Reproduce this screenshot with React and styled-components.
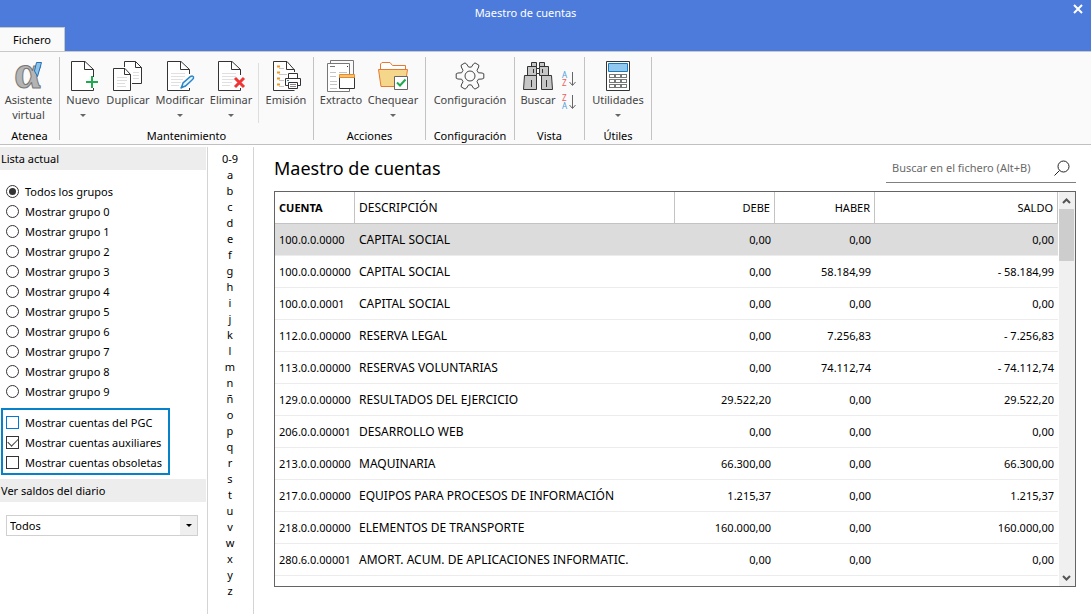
import React from "react";
import styled, { createGlobalStyle, css } from "styled-components";

const GlobalStyle = createGlobalStyle`
  * { box-sizing: border-box; }
  body {
    margin: 0;
    background: #fff;
    color: #000;
    font-family: "Noto Sans", "Open Sans", sans-serif;
    font-size: 11px;
    line-height: 16px;
  }
  button, input, select { font: inherit; color: inherit; }
`;

/* ---------- Shell ---------- */

const Shell = styled.div`
  display: flex;
  flex-direction: column;
  height: 100vh;
`;

const TitleBar = styled.header`
  display: grid;
  grid-template-columns: 1fr auto 1fr;
  align-items: center;
  height: 27px;
  flex: none;
  padding: 0 6px 2px 0;
  background: #4d7bdb;
  color: #fff;
`;

const WindowTitle = styled.div`
  grid-column: 2;
  padding-right: 34px;
`;

const CloseButton = styled.button`
  justify-self: end;
  display: flex;
  padding: 0 0 8px;
  border: 0;
  background: none;
`;

const TabStrip = styled.nav`
  display: flex;
  flex: none;
  height: 24px;
  background: #4d7bdb;
`;

const Tab = styled.button`
  width: 65px;
  border: 0;
  border-top: 1px solid #c8c8c8;
  border-right: 1px solid #c8c8c8;
  padding: 0;
  background: #fafafa;
`;

const Ribbon = styled.div`
  display: flex;
  flex: none;
  height: 94px;
  padding: 5px 0 4px;
  background: #fafafa;
  border-top: 1px solid #c8c8c8;
  border-bottom: 1px solid #c0c0c0;
`;

const Group = styled.section`
  display: flex;
  flex-direction: column;
  width: ${(p) => p.$width}px;
  border-right: 1px solid #c3c3c3;
`;

const GroupTools = styled.div`
  display: flex;
  flex: 1;
  padding: 3px 0 0 ${(p) => p.$start}px;
`;

const GroupLabel = styled.div`
  height: 10px;
  line-height: 12px;
  text-align: center;
`;

const Tool = styled.button`
  display: flex;
  flex-direction: column;
  align-items: center;
  width: ${(p) => p.$width}px;
  padding: 0;
  border: 0;
  background: none;
  color: #444;
  line-height: 15px;
  white-space: pre;

  svg { flex: none; overflow: visible; }
`;

const Caret = styled.span`
  margin-top: 7px;
  border: 3px solid transparent;
  border-top-color: #666;
  border-bottom: 0;
`;

const ToolDivider = styled.span`
  width: 1px;
  height: 60px;
  margin: 3px 1px 0 4px;
  background: #dedede;
`;

const SortStack = styled.div`
  display: flex;
  flex-direction: column;
  gap: 7px;
  padding: 11px 0 0 4px;
`;

const SortButton = styled.button`
  display: flex;
  padding: 0;
  border: 0;
  background: none;
  svg { overflow: visible; }
`;

/* ---------- Body ---------- */

const Body = styled.div`
  display: flex;
  flex: 1;
  min-height: 0;
  padding-top: 2px;
`;

const Sidebar = styled.aside`
  flex: none;
  width: 208px;
  border-right: 1px solid #d4d4d4;
`;

const SideHeading = styled.h2`
  margin: 0 1px 0 0;
  padding: 0 1px;
  background: #ededed;
  font-size: 11px;
  font-weight: 400;
  line-height: 23px;
`;

const OptionList = styled.div`
  display: flex;
  flex-direction: column;
  padding: 12px 6px 6px;
`;

const Option = styled.label`
  display: flex;
  align-items: center;
  gap: 6px;
  height: 20px;
`;

const mark = css`
  appearance: none;
  flex: none;
  display: grid;
  place-items: center;
  width: 13px;
  height: 13px;
  margin: 0 0 1px;
  border: 1px solid #333;
  background: #fff;
`;

const Radio = styled.input`
  ${mark}
  border-radius: 50%;
  &:checked::before {
    content: "";
    width: 7px;
    height: 7px;
    border-radius: 50%;
    background: #333;
  }
`;

const CheckBox = styled.input`
  ${mark}
  border-color: ${(p) => (p.$focused ? "#0078d7" : "#333")};
  &:checked::before {
    content: "";
    width: 9px;
    height: 5px;
    margin-bottom: 3px;
    border: solid #444;
    border-width: 0 0 1px 1px;
    transform: rotate(-45deg);
  }
`;

const CheckFrame = styled.div`
  width: 169px;
  margin: 0 0 4px 1px;
  padding: 3px 3px 0;
  border: 2px solid #0582ca;
`;

const SelectBox = styled.div`
  display: grid;
  grid-template-columns: 1fr 17px;
  margin: 13px 9px 0 6px;
  border: 1px solid #d0d0d0;
`;

const Select = styled.select`
  grid-area: 1 / 1 / 2 / 3;
  appearance: none;
  height: 19px;
  padding: 0 3px;
  border: 0;
  background: none;
`;

const SelectArrow = styled.span`
  grid-area: 1 / 2;
  display: grid;
  place-items: center;
  background: #efefef;
  pointer-events: none;
  &::before {
    content: "";
    border: 3px solid transparent;
    border-top-color: #000;
    border-bottom: 0;
  }
`;

const LetterIndex = styled.nav`
  display: flex;
  flex-direction: column;
  align-items: center;
  flex: none;
  width: 46px;
  padding: 4px 1px 0 0;
  border-right: 1px solid #d4d4d4;
`;

const Letter = styled.a`
  color: #000;
  text-decoration: none;
`;

const Main = styled.main`
  display: flex;
  flex-direction: column;
  flex: 1;
  min-width: 0;
  padding: 8px 15px 27px 20px;
`;

const MainHeader = styled.div`
  display: flex;
  justify-content: space-between;
  align-items: flex-start;
  height: 36px;
  flex: none;
`;

const Heading = styled.h1`
  margin: 0;
  font-size: 18px;
  font-weight: 400;
  line-height: 26px;
`;

const SearchField = styled.label`
  display: flex;
  align-items: center;
  justify-content: space-between;
  width: 190px;
  height: 28px;
  padding: 0 6px 2px;
  border-bottom: 1px solid #808080;
`;

const SearchInput = styled.input`
  flex: 1;
  min-width: 0;
  padding: 0;
  border: 0;
  outline: 0;
  background: none;
  &::placeholder { color: #6a6a6a; opacity: 1; }
`;

const GridFrame = styled.div`
  display: flex;
  flex: 1;
  min-height: 0;
  border: 1px solid #646464;
`;

const GridView = styled.div`
  flex: 1;
  min-width: 0;
  overflow: hidden;
`;

const Table = styled.table`
  width: 100%;
  border-collapse: separate;
  border-spacing: 0;
  table-layout: fixed;
`;

const HeadCell = styled.th`
  width: ${(p) => (p.$width ? `${p.$width}px` : "auto")};
  height: 32px;
  padding: 0 4px;
  border-right: 1px solid #c3c3c3;
  border-bottom: 1px solid #c3c3c3;
  font-size: ${(p) => (p.$sorted || p.$num ? 11 : 12)}px;
  font-weight: ${(p) => (p.$sorted ? 700 : 400)};
  text-align: ${(p) => (p.$num ? "right" : "left")};
`;

const Cell = styled.td`
  height: 32px;
  padding: 0 4px;
  border-bottom: 1px solid #ececec;
  background: ${(p) => (p.$selected ? "#dcdcdc" : "#fff")};
  font-size: ${(p) => (p.$figures ? 11 : 12)}px;
  text-align: ${(p) => (p.$num ? "right" : "left")};
  white-space: nowrap;
`;

const ScrollBar = styled.div`
  display: flex;
  flex-direction: column;
  flex: none;
  width: 16px;
  margin-left: 1px;
  padding-right: 1px;
  background: #f0f0f0;
`;

const ScrollButton = styled.button`
  display: grid;
  place-items: center;
  height: 17px;
  padding: 0;
  border: 0;
  background: none;
`;

const ScrollThumb = styled.div`
  height: 52px;
  margin-bottom: auto;
  background: #cdcdcd;
`;

/* ---------- Icons ---------- */

const Icon = ({ children, size = 32 }) => (
  <svg width={size} height={size} viewBox={`0 0 ${size} ${size}`} fill="none" aria-hidden="true">
    {children}
  </svg>
);

const Sheet = ({ x = 3, lines, cutY = 17 }) => (
  <g transform={`translate(${x} 0)`}>
    <path d={`M22.5 ${cutY}V9.5L14.5 1.5H.5V30.5H22.5V28`} fill="#fff" />
    <path d={`M22.5 ${cutY}V9.5L14 1.5H.5V30.5H22.5V28M13.5 1.5V9.5H22.5`} stroke="#333" />
    {lines && <path d="M4 13.5H18M4 16.5H18M4 19.5H16M4 22.5H14M4 25.5H12" stroke="#e0e0e0" />}
  </g>
);

const AlphaIcon = () => (
  <Icon>
    <text x="1" y="28" fontFamily="Liberation Serif, serif" fontWeight="700" fontSize="48" fill="#b4b4b4" stroke="#777">α</text>
    <path d="M23.5 2.5H28.5L24.5 16.5L21.5 11Z" fill="#8cc3ea" stroke="#2a6fb0" />
  </Icon>
);

const NewIcon = () => (
  <Icon>
    <Sheet x={4} />
    <path d="M25 16V28M19 22H31" stroke="#1faa50" strokeWidth="2" />
  </Icon>
);

const DuplicateIcon = () => (
  <Icon>
    <path d="M12.5 7V1.5H23.5L29.5 7.5V23.5H20" stroke="#333" fill="#fff" />
    <path d="M23.5 1.5V7.5H29.5" stroke="#333" />
    <path d="M21 12.5H27M21 15.5H27M21 18.5H27" stroke="#ddd" />
    <path d="M1.5 8.5H13L18.5 14.5V30.5H1.5Z" stroke="#333" fill="#fff" />
    <path d="M12.5 8.5V14.5H18.5" stroke="#333" />
    <path d="M5 17.5H15M5 20.5H15M5 23.5H13M5 26.5H14" stroke="#ddd" />
  </Icon>
);

const EditIcon = () => (
  <Icon>
    <Sheet lines cutY={14} />
    <path d="M17.5 27.5L19 23L26.5 16.5Q29 15.5 29.5 17Q30 18.5 28 20L21.5 26Z" fill="#e8f4fc" stroke="#2a86c8" strokeWidth="1.5" />
    <path d="M17 28L19 26" stroke="#2a86c8" strokeWidth="2" />
  </Icon>
);

const DeleteIcon = () => (
  <Icon>
    <Sheet lines cutY={15} />
    <path d="M20 18L29 27M29 18L20 27" stroke="#ee3636" strokeWidth="3" />
  </Icon>
);

const PrintIcon = () => (
  <Icon>
    <path d="M3.5 1.5H17.5L24.5 9.5V30.5H3.5Z" fill="#fff" />
    <path d="M24.5 12V10L17 1.5H3.5V30.5H24.5M16.5 1.5V9.5H24.5" stroke="#333" />
    <path d="M7 6.5H10M7 12.5H10M7 18.5H10M7 24.5H10" stroke="#f09a1a" strokeWidth="2" />
    <path d="M9 8.5H14M9 14.5H17M9 20.5H14M9 26.5H14" stroke="#c8c8c8" />
    <path d="M18.5 18.5V13.5H27.5V18.5" stroke="#333" fill="#fff" />
    <path d="M15.5 18.5H30.5V25.5H15.5Z" stroke="#333" fill="#fff" />
    <path d="M17 20.5H19" stroke="#2a86c8" />
    <path d="M18.5 22.5H27.5V28.5H18.5Z" stroke="#333" fill="#fff" />
    <path d="M20 24.5H26M20 26.5H26" stroke="#888" />
  </Icon>
);

const StatementIcon = () => (
  <Icon>
    <path d="M5.5 3.5V.5H28.5V14" stroke="#777" />
    <path d="M2.5 3.5H24.5V31.5H2.5Z" fill="#fff" stroke="#777" />
    <path d="M5 6.5H10" stroke="#777" />
    <path d="M22 6.5H23" stroke="#333" />
    <path d="M5 12.5H11M14 12.5H22M5 16.5H11M5 21.5H12M5 24.5H12M5 28.5H12" stroke="#c4c4c4" />
    <path d="M14.5 17H29.5V28.5H14.5Z" fill="#fff" stroke="#333" />
    <path d="M14.5 14.5H29.5V17.5H14.5Z" fill="#f6c477" stroke="#e88a2a" />
  </Icon>
);

const CheckFolderIcon = () => (
  <Icon>
    <path d="M3.5 9V4L5 2.5H13L15.5 5.5H28.5V10" fill="#fff" stroke="#e87830" />
    <path d="M1.5 9.5H30.5L28 26.5H4Z" fill="#f5d78c" stroke="#e87830" />
    <path d="M17.5 16.5H30.5V29.5H17.5Z" fill="#fff" stroke="#666" />
    <path d="M20 22.5L23 25.5L28.5 19.5" stroke="#1faa50" strokeWidth="2" />
  </Icon>
);

const gearPath =
  [0, 1, 2, 3, 4, 5]
    .flatMap((tooth) =>
      [[-21, 9], [-14, 12.5], [-9, 14], [9, 14], [14, 12.5], [21, 9]].map(([angle, radius]) => {
        const rad = ((tooth * 60 + angle) * Math.PI) / 180;
        return `${(16 + radius * Math.cos(rad)).toFixed(1)} ${(16 + radius * Math.sin(rad)).toFixed(1)}`;
      })
    )
    .reduce((path, point, i) => path + (i ? "L" : "M") + point, "") + "Z";

const GearIcon = () => (
  <Icon>
    <path d={gearPath} stroke="#444" strokeLinejoin="round" />
    <circle cx="16" cy="16" r="5" stroke="#444" />
  </Icon>
);

const BinocularsIcon = () => (
  <Icon>
    <g fill="#c6c6c6" stroke="#333">
      <path d="M9.5 2.5H14.5V6.5H9.5ZM17.5 2.5H22.5V6.5H17.5Z" />
      <path d="M5.5 6.5H14.5V15.5H5.5ZM17.5 6.5H26.5V15.5H17.5Z" />
      <path d="M2.5 15.5H14.5V29.5H1.5ZM19.5 15.5H29.5L30.5 29.5H19.5Z" />
      <path d="M14.5 8.5H17.5V13.5H14.5Z" fill="#fff" />
      <path d="M11.5 9V13M20.5 9V13M9.5 20V27M24.5 20V27" />
    </g>
  </Icon>
);

const CalculatorIcon = () => (
  <Icon>
    <path d="M4.5 1.5H27.5V30.5H4.5Z" fill="#fff" stroke="#333" />
    <path d="M6.5 3.5H25.5V11.5H6.5Z" fill="#90c8f0" stroke="#1a78b8" />
    <g stroke="#777">
      {[14.5, 19.5, 24.5].map((y) =>
        [7.5, 13.5, 19.5].map((x) => <rect key={`${x}-${y}`} x={x} y={y} width="5" height="3" />)
      )}
    </g>
  </Icon>
);

const SortIcon = ({ top, bottom }) => {
  const tint = { A: "#4aa0d8", Z: "#ee5a5a" };
  return (
    <Icon size={16}>
      <text x="1" y="7" fontSize="8" fontFamily="Noto Sans, sans-serif" fill={tint[top]}>{top}</text>
      <text x="1" y="15" fontSize="8" fontFamily="Noto Sans, sans-serif" fill={tint[bottom]}>{bottom}</text>
      <path d="M11.5 1V14M8.5 11L11.5 14.5L14.5 11" stroke="#666" />
    </Icon>
  );
};

const SearchIcon = () => (
  <Icon size={16}>
    <circle cx="9.5" cy="6.5" r="5.5" stroke="#222" />
    <path d="M5.5 10.5L.5 15.5" stroke="#222" />
  </Icon>
);

const CloseIcon = () => (
  <svg width="14" height="10" viewBox="0 0 14 10" aria-hidden="true">
    <path d="M3 1L11 9M11 1L3 9" stroke="#fff" strokeWidth="2" />
  </svg>
);

const Chevron = ({ down }) => (
  <svg width="9" height="6" viewBox="0 0 9 6" fill="none" aria-hidden="true">
    <path d={down ? "M1 1L4.5 4.5L8 1" : "M1 5L4.5 1.5L8 5"} stroke="#555" strokeWidth="2" />
  </svg>
);

/* ---------- Data ---------- */

const groups = [
  { label: "Atenea", width: 60, start: 0, tools: [{ label: "Asistente\nvirtual", width: 57, icon: AlphaIcon }] },
  {
    label: "Mantenimiento",
    width: 254,
    start: 2,
    tools: [
      { label: "Nuevo", width: 42, icon: NewIcon, menu: true },
      { label: "Duplicar", width: 48, icon: DuplicateIcon },
      { label: "Modificar", width: 56, icon: EditIcon, menu: true },
      { label: "Eliminar", width: 46, icon: DeleteIcon, menu: true },
      { divider: true },
      { label: "Emisión", width: 52, icon: PrintIcon },
    ],
  },
  {
    label: "Acciones",
    width: 112,
    start: 3,
    tools: [
      { label: "Extracto", width: 48, icon: StatementIcon },
      { label: "Chequear", width: 56, icon: CheckFolderIcon, menu: true },
    ],
  },
  { label: "Configuración", width: 89, start: 4, tools: [{ label: "Configuración", width: 80, icon: GearIcon }] },
  { label: "Vista", width: 70, start: 4, tools: [{ label: "Buscar", width: 38, icon: BinocularsIcon }, { sort: true }] },
  { label: "Útiles", width: 67, start: 3, tools: [{ label: "Utilidades", width: 60, icon: CalculatorIcon, menu: true }] },
];

const accountGroups = ["Todos los grupos", ...Array.from({ length: 10 }, (_, i) => `Mostrar grupo ${i}`)];
const letters = ["0-9", ..."abcdefghijklmnñopqrstuvwxyz"];

const accounts = [
  ["100.0.0.0000", "CAPITAL SOCIAL", "0,00", "0,00", "0,00"],
  ["100.0.0.00000", "CAPITAL SOCIAL", "0,00", "58.184,99", "- 58.184,99"],
  ["100.0.0.0001", "CAPITAL SOCIAL", "0,00", "0,00", "0,00"],
  ["112.0.0.00000", "RESERVA LEGAL", "0,00", "7.256,83", "- 7.256,83"],
  ["113.0.0.00000", "RESERVAS VOLUNTARIAS", "0,00", "74.112,74", "- 74.112,74"],
  ["129.0.0.00000", "RESULTADOS DEL EJERCICIO", "29.522,20", "0,00", "29.522,20"],
  ["206.0.0.00001", "DESARROLLO WEB", "0,00", "0,00", "0,00"],
  ["213.0.0.00000", "MAQUINARIA", "66.300,00", "0,00", "66.300,00"],
  ["217.0.0.00000", "EQUIPOS PARA PROCESOS DE INFORMACIÓN", "1.215,37", "0,00", "1.215,37"],
  ["218.0.0.00000", "ELEMENTOS DE TRANSPORTE", "160.000,00", "0,00", "160.000,00"],
  ["280.6.0.00001", "AMORT. ACUM. DE APLICACIONES INFORMATIC.", "0,00", "0,00", "0,00"],
];

/* ---------- Parts ---------- */

const RibbonTool = ({ tool }) => {
  if (tool.divider) return <ToolDivider />;
  if (tool.sort) {
    return (
      <SortStack>
        <SortButton aria-label="Orden ascendente"><SortIcon top="A" bottom="Z" /></SortButton>
        <SortButton aria-label="Orden descendente"><SortIcon top="Z" bottom="A" /></SortButton>
      </SortStack>
    );
  }
  const ToolIcon = tool.icon;
  return (
    <Tool $width={tool.width}>
      <ToolIcon />
      {tool.label}
      {tool.menu && <Caret />}
    </Tool>
  );
};

export default function App() {
  return (
    <>
      <GlobalStyle />
      <Shell>
        <TitleBar>
          <WindowTitle>Maestro de cuentas</WindowTitle>
          <CloseButton aria-label="Cerrar"><CloseIcon /></CloseButton>
        </TitleBar>
        <TabStrip><Tab>Fichero</Tab></TabStrip>
        <Ribbon>
          {groups.map((group) => (
            <Group key={group.label} $width={group.width}>
              <GroupTools $start={group.start}>
                {group.tools.map((tool, i) => <RibbonTool key={i} tool={tool} />)}
              </GroupTools>
              <GroupLabel>{group.label}</GroupLabel>
            </Group>
          ))}
        </Ribbon>
        <Body>
          <Sidebar>
            <SideHeading>Lista actual</SideHeading>
            <OptionList>
              {accountGroups.map((name, i) => (
                <Option key={name}>
                  <Radio type="radio" name="group" defaultChecked={i === 0} />
                  {name}
                </Option>
              ))}
            </OptionList>
            <CheckFrame>
              <Option><CheckBox type="checkbox" $focused />Mostrar cuentas del PGC</Option>
              <Option><CheckBox type="checkbox" defaultChecked />Mostrar cuentas auxiliares</Option>
              <Option><CheckBox type="checkbox" />Mostrar cuentas obsoletas</Option>
            </CheckFrame>
            <SideHeading id="saldos">Ver saldos del diario</SideHeading>
            <SelectBox>
              <SelectArrow />
              <Select aria-labelledby="saldos"><option>Todos</option></Select>
            </SelectBox>
          </Sidebar>
          <LetterIndex>
            {letters.map((letter) => <Letter key={letter} href={`#${letter}`}>{letter}</Letter>)}
          </LetterIndex>
          <Main>
            <MainHeader>
              <Heading>Maestro de cuentas</Heading>
              <SearchField>
                <SearchInput type="text" aria-label="Buscar en el fichero" placeholder="Buscar en el fichero (Alt+B)" />
                <SearchIcon />
              </SearchField>
            </MainHeader>
            <GridFrame>
              <GridView>
                <Table>
                  <thead>
                    <tr>
                      <HeadCell $width={80} $sorted>CUENTA</HeadCell>
                      <HeadCell>DESCRIPCIÓN</HeadCell>
                      <HeadCell $width={100} $num>DEBE</HeadCell>
                      <HeadCell $width={100} $num>HABER</HeadCell>
                      <HeadCell $width={183} $num>SALDO</HeadCell>
                    </tr>
                  </thead>
                  <tbody>
                    {accounts.map((row, r) => (
                      <tr key={row[0]}>
                        {row.map((value, c) => (
                          <Cell key={c} $num={c > 1} $figures={c !== 1} $selected={r === 0}>{value}</Cell>
                        ))}
                      </tr>
                    ))}
                  </tbody>
                </Table>
              </GridView>
              <ScrollBar>
                <ScrollButton aria-label="Subir"><Chevron /></ScrollButton>
                <ScrollThumb />
                <ScrollButton aria-label="Bajar"><Chevron down /></ScrollButton>
              </ScrollBar>
            </GridFrame>
          </Main>
        </Body>
      </Shell>
    </>
  );
}
